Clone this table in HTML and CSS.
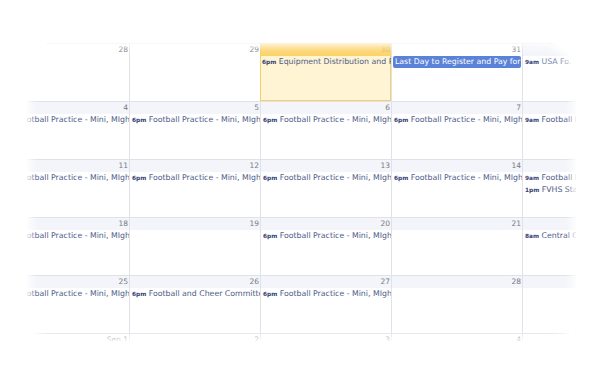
FILE: index.html
```html
<!DOCTYPE html>
<html>
<head>
<meta charset="utf-8">
<link rel="stylesheet" href="styles.css">
</head>
<body>
<div class="view">
  <div class="month">
    <div class="cell other"><div class="day">28</div></div>
    <div class="cell other"><div class="day">29</div></div>
    <div class="cell other today"><div class="day">30</div><div class="ev"><b>6pm</b> Equipment Distribution and Physicals</div></div>
    <div class="cell other"><div class="day">31</div><div class="ev chip">Last Day to Register and Pay for Fall Season</div></div>
    <div class="cell"><div class="day">1</div><div class="ev fade"><b>9am</b> USA Fo.</div></div>

    <div class="cell"><div class="day">4</div><div class="ev"><b>6pm</b> Football Practice - Mini, MIghty Mites</div></div>
    <div class="cell"><div class="day">5</div><div class="ev"><b>6pm</b> Football Practice - Mini, MIghty Mites</div></div>
    <div class="cell"><div class="day">6</div><div class="ev"><b>6pm</b> Football Practice - Mini, MIghty Mites</div></div>
    <div class="cell"><div class="day">7</div><div class="ev"><b>6pm</b> Football Practice - Mini, MIghty Mites</div></div>
    <div class="cell"><div class="day">8</div><div class="ev"><b>9am</b> Football Practice - All Teams</div></div>

    <div class="cell"><div class="day">11</div><div class="ev"><b>6pm</b> Football Practice - Mini, MIghty Mites</div></div>
    <div class="cell"><div class="day">12</div><div class="ev"><b>6pm</b> Football Practice - Mini, MIghty Mites</div></div>
    <div class="cell"><div class="day">13</div><div class="ev"><b>6pm</b> Football Practice - Mini, MIghty Mites</div></div>
    <div class="cell"><div class="day">14</div><div class="ev"><b>6pm</b> Football Practice - Mini, MIghty Mites</div></div>
    <div class="cell"><div class="day">15</div><div class="ev"><b>9am</b> Football Practice - All Teams</div><div class="ev"><b>1pm</b> FVHS Stadium Scrimmage</div></div>

    <div class="cell"><div class="day">18</div><div class="ev"><b>6pm</b> Football Practice - Mini, MIghty Mites</div></div>
    <div class="cell"><div class="day">19</div></div>
    <div class="cell"><div class="day">20</div><div class="ev"><b>6pm</b> Football Practice - Mini, MIghty Mites</div></div>
    <div class="cell"><div class="day">21</div></div>
    <div class="cell"><div class="day">22</div><div class="ev"><b>8am</b> Central Conference Jamboree</div></div>

    <div class="cell"><div class="day">25</div><div class="ev"><b>6pm</b> Football Practice - Mini, MIghty Mites</div></div>
    <div class="cell"><div class="day">26</div><div class="ev"><b>6pm</b> Football and Cheer Committee Meeting</div></div>
    <div class="cell"><div class="day">27</div><div class="ev"><b>6pm</b> Football Practice - Mini, MIghty Mites</div></div>
    <div class="cell"><div class="day">28</div></div>
    <div class="cell"><div class="day">29</div></div>

    <div class="cell other"><div class="day">Sep 1</div></div>
    <div class="cell other"><div class="day">2</div></div>
    <div class="cell other"><div class="day">3</div></div>
    <div class="cell other"><div class="day">4</div></div>
    <div class="cell other"><div class="day">5</div></div>
  </div>
</div>
</body>
</html>
```
FILE: styles.css
```css
html, body {
  margin: 0;
  padding: 0;
  background: #ffffff;
}
body {
  font-family: "DejaVu Sans", Verdana, sans-serif;
}
.view {
  position: relative;
  margin: 42px 0 0 27px;
  width: 549px;
  height: 299px;
  overflow: hidden;
  border-radius: 30px 34px 26px 26px;
}
.view::after {
  content: "";
  position: absolute;
  inset: 0;
  border-radius: inherit;
  box-shadow: inset 0 0 8px 4px #ffffff;
  pointer-events: none;
}
.month {
  margin: 1px 0 0 -29px;
  display: grid;
  grid-template-columns: repeat(5, 131px);
  grid-template-rows: repeat(6, 58px);
  width: 655px;
}
.cell {
  box-sizing: border-box;
  border-top: 1px solid #dfe2e9;
  border-left: 1px solid #dfe2e9;
  overflow: hidden;
  background: #ffffff;
}
.day {
  height: 12px;
  line-height: 12px;
  font-size: 7.5px;
  color: #777a80;
  text-align: right;
  padding-right: 1px;
  background: #f3f5fa;
}
.other .day {
  background: #ffffff;
}
.today {
  background: #fff4d3;
  border-color: #f3d06a;
  box-shadow: inset -1px -1px 0 #f3d06a;
}
.today .day {
  background: #fcd46c;
  color: #e4b858;
}
.ev {
  height: 12px;
  line-height: 12px;
  font-size: 7.8px;
  color: #4d5b89;
  white-space: nowrap;
  overflow: hidden;
  padding-left: 2px;
}
.today .ev {
  padding-left: 1px;
}
.ev b {
  font-size: 5.8px;
  color: #2f3e73;
}
.chip {
  margin: 0 1px 0 1px;
  padding-left: 2px;
  background: #5a82d8;
  color: #ffffff;
  border-radius: 2px;
}
.fade {
  color: #7d88ab;
}
```
